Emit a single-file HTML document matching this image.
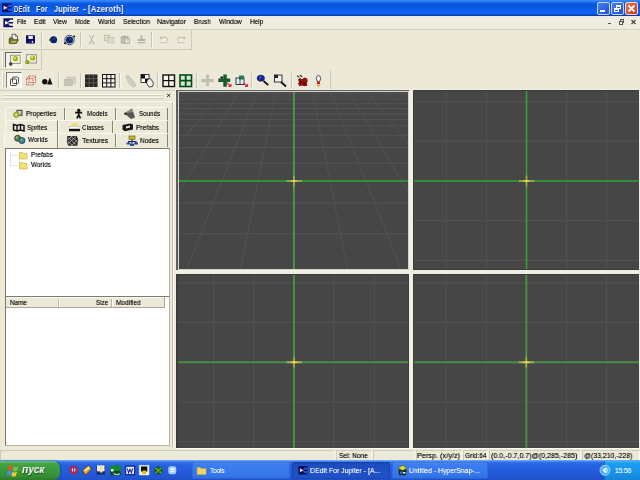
<!DOCTYPE html>
<html><head><meta charset="utf-8"><title>DEdit</title>
<style>
*{box-sizing:border-box;margin:0;padding:0}
html,body{width:640px;height:480px;overflow:hidden;background:#ECE9D8;font-family:"Liberation Sans",sans-serif;}
.a{position:absolute}
.t{position:absolute;white-space:nowrap;font-size:7px;color:#1a1a1a;line-height:8px;will-change:transform}
#title{left:0;top:0;width:640px;height:16px;background:linear-gradient(#3b8ef8 0%,#2c7af3 9%,#0d5be4 20%,#0655dc 42%,#0a5cea 58%,#0f63f4 78%,#0c57e2 89%,#0a3cae 96%,#0a3cae 100%);}
#title .tt{left:14px;top:3px;font-size:9px;line-height:10px;font-weight:bold;color:#fff;white-space:nowrap;text-shadow:0.5px 0.5px 0 #0a2a80}
.wb{position:absolute;top:1.5px;width:13px;height:13px;border:1px solid #c4d4fc;border-radius:2px;background:linear-gradient(135deg,#4a7ff0,#2050d8)}
.sep{position:absolute;width:2px;border-left:1px solid #c6c3b2;border-right:1px solid #f6f5ee}
.grip{position:absolute;width:2px;margin-left:-1px;border-left:1px solid #fbfaf5;border-right:1px solid #cdcab8;}
.hl{position:absolute;height:1px}
.vp{position:absolute;background:#464646;overflow:hidden}
svg{position:absolute;left:0;top:0;overflow:visible}
.tab{position:absolute;height:13px;background:#ECE9D8;border:1px solid #f9f8f1;border-right-color:#85826f;border-bottom:none;border-radius:2px 2px 0 0}
.tb{position:absolute;height:17px;top:462px;border-radius:2px;background:linear-gradient(#5a96f4 0%,#3c7ef0 12%,#3576ea 80%,#2c68da 100%);box-shadow:inset 0 0 0 0.5px #2a5cc8}

.cell{position:absolute;top:450px;height:10.5px;border:1px solid #cfccba;border-right-color:#fbfaf5;border-bottom-color:#fbfaf5}
</style></head><body>
<div id="title" class="a"><div class="t" style="left:14.10px;top:3.60px;font-size:9px;line-height:10px;color:#f4f7ff;transform:scaleX(0.6724);transform-origin:0 0;font-weight:bold;text-shadow:0.5px 0.5px 0.3px #0a2a80;">DEdit</div><div class="t" style="left:35.90px;top:3.60px;font-size:9px;line-height:10px;color:#f4f7ff;transform:scaleX(0.8001);transform-origin:0 0;font-weight:bold;text-shadow:0.5px 0.5px 0.3px #0a2a80;">For</div><div class="t" style="left:53.50px;top:3.60px;font-size:9px;line-height:10px;color:#f4f7ff;transform:scaleX(0.8332);transform-origin:0 0;font-weight:bold;text-shadow:0.5px 0.5px 0.3px #0a2a80;">Jupiter</div><div class="t" style="left:82.80px;top:3.60px;font-size:9px;line-height:10px;color:#f4f7ff;transform:scaleX(0.9341);transform-origin:0 0;font-weight:bold;text-shadow:0.5px 0.5px 0.3px #0a2a80;">-</div><div class="t" style="left:88.40px;top:3.60px;font-size:9px;line-height:10px;color:#f4f7ff;transform:scaleX(0.9014);transform-origin:0 0;font-weight:bold;text-shadow:0.5px 0.5px 0.3px #0a2a80;">[Azeroth]</div><svg width="14" height="16" viewBox="0 0 14 16"><path d="M2 3.2 H11.6 V4.7 H8.5 L6.5 7 H11.6 V8.4 H6.5 L8.5 10.7 H11.6 V12.2 H2Z" fill="#10106a"/><path d="M3.6 5.7 L7.6 7.7 L3.6 9.7Z" fill="#f4e0f4"/></svg><div class="wb" style="left:597px"><div class="a" style="left:2px;top:7px;width:5px;height:2px;background:#fff"></div></div><div class="wb" style="left:611px"><div class="a" style="left:4px;top:2px;width:5px;height:4px;border:1px solid #fff;border-top-width:2px"></div><div class="a" style="left:2px;top:5px;width:5px;height:4px;border:1px solid #fff;border-top-width:2px;background:#2a5ce0"></div></div><div class="wb" style="left:625px;background:linear-gradient(135deg,#e8754a,#c83c18);border-color:#f4d8d0"><svg width="11" height="11" viewBox="0 0 11 11"><path d="M2.5 2.5 L8.5 8.5 M8.5 2.5 L2.5 8.5" stroke="#fff" stroke-width="1.8"/></svg></div></div>
<div class="a" style="left:0;top:16px;width:640px;height:13px;background:linear-gradient(#e9e9e3 0%,#ecece4 12%,#f0eee1 30%,#efecdc 100%)"></div><svg width="16" height="30" viewBox="0 0 16 30"><g transform="translate(1.4,15)"><path d="M2 3.2 H11.6 V4.7 H8.5 L6.5 7 H11.6 V8.4 H6.5 L8.5 10.7 H11.6 V12.2 H2Z" fill="#10106a"/><path d="M3.6 5.700 L7.6 7.7 L3.6 9.7Z" fill="#ffffff"/></g></svg><div class="t" style="left:17.00px;top:18.40px;font-size:7px;line-height:8px;color:#0c0c0c;transform:scaleX(0.8245);transform-origin:0 0;text-shadow:0 0 0.6px rgba(0,0,0,0.55);">File</div><div class="t" style="left:34.00px;top:18.40px;font-size:7px;line-height:8px;color:#0c0c0c;transform:scaleX(0.9534);transform-origin:0 0;text-shadow:0 0 0.6px rgba(0,0,0,0.55);">Edit</div><div class="t" style="left:52.70px;top:18.40px;font-size:7px;line-height:8px;color:#0c0c0c;transform:scaleX(0.9171);transform-origin:0 0;text-shadow:0 0 0.6px rgba(0,0,0,0.55);">View</div><div class="t" style="left:74.50px;top:18.40px;font-size:7px;line-height:8px;color:#0c0c0c;transform:scaleX(0.8623);transform-origin:0 0;text-shadow:0 0 0.6px rgba(0,0,0,0.55);">Mode</div><div class="t" style="left:98.30px;top:18.40px;font-size:7px;line-height:8px;color:#0c0c0c;transform:scaleX(0.9309);transform-origin:0 0;text-shadow:0 0 0.6px rgba(0,0,0,0.55);">World</div><div class="t" style="left:122.80px;top:18.40px;font-size:7px;line-height:8px;color:#0c0c0c;transform:scaleX(0.9376);transform-origin:0 0;text-shadow:0 0 0.6px rgba(0,0,0,0.55);">Selection</div><div class="t" style="left:157.30px;top:18.40px;font-size:7px;line-height:8px;color:#0c0c0c;transform:scaleX(0.9680);transform-origin:0 0;text-shadow:0 0 0.6px rgba(0,0,0,0.55);">Navigator</div><div class="t" style="left:194.40px;top:18.40px;font-size:7px;line-height:8px;color:#0c0c0c;transform:scaleX(0.9132);transform-origin:0 0;text-shadow:0 0 0.6px rgba(0,0,0,0.55);">Brush</div><div class="t" style="left:218.80px;top:18.40px;font-size:7px;line-height:8px;color:#0c0c0c;transform:scaleX(0.9158);transform-origin:0 0;text-shadow:0 0 0.6px rgba(0,0,0,0.55);">Window</div><div class="t" style="left:249.70px;top:18.40px;font-size:7px;line-height:8px;color:#0c0c0c;transform:scaleX(0.9169);transform-origin:0 0;text-shadow:0 0 0.6px rgba(0,0,0,0.55);">Help</div><div class="a" style="left:607.5px;top:23px;width:3.5px;height:1.3px;background:#555"></div><div class="a" style="left:620px;top:19px;width:4px;height:4px;border:0.7px solid #555;border-top-width:1.3px"></div><div class="a" style="left:618.5px;top:20.7px;width:4px;height:4px;border:0.7px solid #555;border-top-width:1.3px;background:#EFECDD"></div><svg width="640" height="30" viewBox="0 0 640 30"><path d="M631.5 20 L635.5 24 M635.5 20 L631.5 24" stroke="#444" stroke-width="1.1"/></svg><div class="hl" style="left:0;top:29px;width:640px;background:#d6d2c2"></div>
<!-- toolbar 1 -->
<div class="grip" style="left:3px;top:32px;height:15px"></div>
<div class="a" style="left:0;top:49px;width:192px;height:1px;background:#cfcbb9"></div>
<div class="a" style="left:191px;top:30px;width:1px;height:19px;background:#cfcbb9"></div>
<div class="sep" style="left:41px;top:32px;height:15px"></div>
<div class="sep" style="left:80px;top:32px;height:15px"></div>
<div class="sep" style="left:151px;top:32px;height:15px"></div>
<svg width="200" height="50" viewBox="0 0 200 50">
<!-- open -->
<path d="M12 34.300 h3.500 l2 2 v3.800 h-5.500z" fill="#f6f6ee" stroke="#3a3a3a" stroke-width="0.800"/><path d="M15.500 34.300 v2 h2" fill="none" stroke="#3a3a3a" stroke-width="0.600"/>
<path d="M9.200 38.600 L11.300 37.300 L13 38.400 L13 39.800 L18.400 39.800 L16.400 43.400 L9.200 43.400 Z" fill="#77771f" stroke="#3c3c10" stroke-width="0.700"/>
<path d="M10.400 42.700 L12 40.700 L17 40.700 L15.700 42.700Z" fill="#b4b45c"/>
<!-- save -->
<rect x="26" y="35.300" width="9" height="8.100" fill="#0c0c58"/><rect x="28.400" y="35.900" width="4.400" height="3.100" fill="#ececf6"/><rect x="28.600" y="40.600" width="5" height="2.800" fill="#22227a"/><rect x="31.900" y="40.900" width="1.200" height="1.900" fill="#e4e4f4"/>
<!-- globe -->
<circle cx="53.600" cy="39.700" r="4.300" fill="#e2e6f2" opacity="0.700"/><circle cx="53.600" cy="39.700" r="3.500" fill="#10206a"/><circle cx="54.600" cy="38.700" r="1.300" fill="#24408c"/>
<path d="M48.800 40.300 L51.800 36.800 L52 39 L53 39.400 L51.600 41.200 Z" fill="#163c24"/>
<!-- globe 2 -->
<circle cx="69.500" cy="40" r="5.400" fill="none" stroke="#d4def2" stroke-width="0.900"/><circle cx="69.500" cy="40" r="4.700" fill="none" stroke="#1c2c48" stroke-width="0.800"/><circle cx="69.500" cy="40" r="3.600" fill="#10206a"/><circle cx="70.300" cy="39" r="1.300" fill="#24408c"/>
<rect x="64.100" y="42.400" width="1.700" height="1.700" fill="#050505"/><rect x="73.400" y="35.600" width="1.700" height="1.700" fill="#050505"/>
<!-- disabled: cut, copy, paste, del -->
<path d="M89.500 35 l3.800 8 M93.700 35 l-3.800 8" stroke="#bcb9a9" stroke-width="1"/><circle cx="89.800" cy="43.200" r="0.900" fill="none" stroke="#bcb9a9" stroke-width="0.700"/><circle cx="93.400" cy="43.200" r="0.900" fill="none" stroke="#bcb9a9" stroke-width="0.700"/>
<rect x="104.300" y="35.200" width="5" height="5.500" fill="#dedbca" stroke="#bcb9a9" stroke-width="0.800"/><rect x="107.800" y="37.500" width="5.500" height="5.500" fill="#e2dfce" stroke="#bcb9a9" stroke-width="0.800"/><path d="M109 39.500 h3 M109 41 h3" stroke="#c8c5b5" stroke-width="0.500"/>
<rect x="121.200" y="36.800" width="7" height="6.300" fill="#c4c1b2" stroke="#a9a697" stroke-width="0.800"/><rect x="124.500" y="38.800" width="5.200" height="4.500" fill="#e0ddcc" stroke="#a9a697" stroke-width="0.700"/><rect x="123" y="35.800" width="3.400" height="1.600" fill="#a9a697"/>
<path d="M140.500 35.600 h2 v3.500 h2.800 v2 h-7.500 v-2 h2.700z M137.800 42 h7.500 v1.200 h-7.500z" fill="#b6b3a4"/>
<!-- undo/redo disabled -->
<path d="M161 38 q3-2.200 6 0 q1 1.500 0 3.500" fill="none" stroke="#bfbcac" stroke-width="1"/><path d="M159.600 36.200 l0.600 3 l2.600-1z" fill="#bfbcac"/><path d="M160 42.700 h7.500" stroke="#c4c1b1" stroke-width="0.900"/>
<path d="M184 38 q-3-2.200 -6 0 q-1 1.500 0 3.500" fill="none" stroke="#bfbcac" stroke-width="1"/><path d="M185.400 36.200 l-0.600 3 l-2.600-1z" fill="#bfbcac"/><path d="M177.500 42.700 h7.500" stroke="#c4c1b1" stroke-width="0.900"/>
</svg>
<!-- toolbar 2 -->
<div class="grip" style="left:3px;top:52px;height:15px"></div>
<div class="a" style="left:0;top:69px;width:42px;height:1px;background:#cfcbb9"></div>
<div class="a" style="left:41px;top:50px;width:1px;height:19px;background:#cfcbb9"></div>
<div class="a" style="left:5px;top:52px;width:17px;height:16px;background:#f3f2ea;border:1.300px solid #66665f;border-right:1px solid #fdfdf8;border-bottom:1px solid #fdfdf8"></div>
<svg width="50" height="70" viewBox="0 0 50 70">
<rect x="10.500" y="55.200" width="9.700" height="8.200" fill="#f3f3e2" stroke="#8c8c80" stroke-width="0.900"/>
<circle cx="15.400" cy="58.700" r="2.600" fill="#a9b214"/><circle cx="14.900" cy="58.100" r="1.100" fill="#dfe865"/>
<circle cx="10.750" cy="64" r="1.700" fill="#1c1c1c"/><circle cx="10.900" cy="64" r="0.600" fill="#d8d8d8"/>
<rect x="26.400" y="54.700" width="10" height="8.300" fill="#f0f0de" stroke="#8c8c80" stroke-width="0.900"/>
<circle cx="32.600" cy="58" r="2.600" fill="#a9b214"/><circle cx="32.100" cy="57.400" r="1.100" fill="#dfe865"/>
<circle cx="27.300" cy="62.100" r="2.200" fill="#8c9410"/><circle cx="26.900" cy="61.600" r="0.800" fill="#c8d040"/>
</svg>
<!-- toolbar 3 -->
<div class="grip" style="left:3px;top:73px;height:15px"></div>
<div class="a" style="left:0;top:90px;width:331px;height:1px;background:#cfcbb9"></div>
<div class="a" style="left:330px;top:70px;width:1px;height:20px;background:#cfcbb9"></div>
<div class="a" style="left:6px;top:72px;width:16px;height:16px;background:#f8f7f0;border:1px solid #7f7c6e;border-right-color:#fff;border-bottom-color:#fff"></div>
<div class="sep" style="left:58px;top:73px;height:15px"></div>
<div class="sep" style="left:80px;top:73px;height:15px"></div>
<div class="sep" style="left:119px;top:73px;height:15px"></div>
<div class="sep" style="left:157px;top:73px;height:15px"></div>
<div class="sep" style="left:196px;top:73px;height:15px"></div>
<div class="sep" style="left:251px;top:73px;height:15px"></div>
<div class="sep" style="left:291px;top:73px;height:15px"></div>
<svg width="340" height="95" viewBox="0 0 340 95">
<!-- 1 box wire -->
<rect x="10.500" y="79" width="6" height="6.500" rx="1" fill="none" stroke="#333" stroke-width="0.900"/><rect x="12.500" y="77" width="6" height="6.500" rx="1" fill="none" stroke="#444" stroke-width="0.900"/>
<!-- 2 red wire -->
<g stroke="#d04848" stroke-width="0.800" fill="none" stroke-dasharray="1.600 0.800"><rect x="26.500" y="78.500" width="6.500" height="6.500"/><rect x="29" y="76" width="6.500" height="6.500"/><path d="M26.500 78.500 l2.500-2.500 M33 78.500 l2.500-2.500 M26.500 85 l2.500-2.500 M33 85 l2.500-2.500"/></g>
<!-- 3 ball cone -->
<circle cx="44.800" cy="81.700" r="2.700" fill="#111"/><path d="M49.800 77.500 l2.700 7 h-5.400z" fill="#111"/>
<!-- 4 gray -->
<rect x="67" y="77" width="8.500" height="6.500" fill="#d8d5c6" stroke="#c2bfae" stroke-width="0.700"/><rect x="64.500" y="79.500" width="8" height="6" fill="#c8c5b6" stroke="#b8b5a4" stroke-width="0.700"/>
<!-- 5 dark grid -->
<rect x="85" y="74.500" width="12.500" height="12.500" fill="#2a2824"/><path d="M89.200 74.500 v12.500 M93.400 74.500 v12.500 M85 78.700 h12.500 M85 82.900 h12.500" stroke="#6a665c" stroke-width="0.800"/>
<!-- 6 light grid -->
<rect x="102.500" y="74.500" width="12.500" height="12.500" fill="#f4f2ea" stroke="#111" stroke-width="1"/><path d="M106.700 74.500 v12.500 M110.900 74.500 v12.500 M102.500 78.700 h12.500 M102.500 82.900 h12.500" stroke="#111" stroke-width="1"/>
<!-- 7 hand disabled -->
<path d="M125.500 76.500 l3-1 l6 7 l1.500 3.500 l-3 1 l-3.500-3 z" fill="#d0cdbc" stroke="#bcb9a8" stroke-width="0.700"/>
<!-- 8 checker+hand -->
<rect x="141" y="74.500" width="8" height="8" fill="#fff" stroke="#111" stroke-width="0.800"/><rect x="141" y="74.500" width="4" height="4" fill="#111"/><rect x="145" y="78.500" width="4" height="4" fill="#111"/>
<path d="M147.500 79.500 l3-1 l3 4.500 l-1 3.500 l-3.500 0.500 l-2.500-4z" fill="#f4f2ea" stroke="#222" stroke-width="0.800"/>
<!-- 9 four pane -->
<rect x="163" y="75" width="11.500" height="11.500" fill="#f8f6ee" stroke="#111" stroke-width="1.400"/><path d="M168.700 75 v11.500 M163 80.700 h11.500" stroke="#111" stroke-width="1.200"/>
<!-- 10 green four pane -->
<rect x="180" y="75" width="11.500" height="11.500" fill="#c8f0d0" stroke="#0a4a1a" stroke-width="1.600"/><path d="M185.700 75 v11.500 M180 80.700 h11.500" stroke="#0a4a1a" stroke-width="1.800"/>
<!-- 11 gray plus -->
<path d="M206 74.500 h3 v4.500 h4.700 v3.300 h-4.700 v4 h-3 v-4 h-4.700 v-3.300 h4.700z" fill="#c2bfb0"/>
<!-- 12 green plus + red arrow -->
<path d="M223.300 74.500 h3.500 v4 h3.400 v3.500 h-3.400 v4.800 h-3.500 v-4.800 h-5 v-3.500 h5z" fill="#155a30"/><rect x="220.500" y="76.500" width="2.500" height="2" fill="#1a1a1a"/><path d="M227 83 l4 3.500 M231 86.500 v-2.500 M231 86.500 h-2.500" stroke="#e02020" stroke-width="1.100" fill="none"/>
<!-- 13 box + red arrow -->
<rect x="236" y="78" width="8" height="6.500" fill="#e8f0f0" stroke="#223" stroke-width="0.900"/><rect x="239" y="75.500" width="5" height="4" fill="#2a7a5a"/><path d="M240 78 v6.500" stroke="#223" stroke-width="0.800"/><path d="M243.500 83 l4 3.500 M247.500 86.500 v-2.500 M247.500 86.500 h-2.500" stroke="#e02020" stroke-width="1.100" fill="none"/>
<!-- 14 blue magnifier -->
<ellipse cx="260.800" cy="78.200" rx="3.600" ry="3" fill="#1a28a8" stroke="#0a0a50" stroke-width="0.800"/><circle cx="260" cy="77.500" r="1" fill="#4a60d8"/><path d="M263.600 81 l4.600 4.200" stroke="#111" stroke-width="1.800"/>
<!-- 15 magnifier -->
<rect x="274.500" y="75" width="7.500" height="7" fill="#f4f4f4" stroke="#222" stroke-width="0.900"/><rect x="274.500" y="75" width="3.500" height="3" fill="#222"/><path d="M281 82 l5 4.500" stroke="#111" stroke-width="1.800"/>
<!-- 16 red -->
<path d="M298 79.500 l2-1.500 l2 1.200 l2.500-1.700 l2.700 1 l0.500 3 l-1 1.500 l0.800 2.500 l-3 0.800 l-2.500-0.800 l-2.500 0.800 l-1.500-2.500 l1-1.800z" fill="#8c0c0c"/><circle cx="301" cy="82" r="0.800" fill="#200"/><circle cx="304.500" cy="83.500" r="0.800" fill="#200"/><circle cx="305" cy="80.300" r="0.700" fill="#c03030"/>
<path d="M297.200 75.800 l2.200 1.600 M300 75.200 l2.200 1.600" stroke="#2a1a1a" stroke-width="1.100"/>
<!-- 17 lamp -->
<ellipse cx="318.500" cy="78.500" rx="2.200" ry="3" fill="#f0f0f0" stroke="#333" stroke-width="0.800"/><rect x="317" y="81.500" width="3" height="2.500" fill="#c02020"/><path d="M316 84.500 h5 l-2.500 2.500z" fill="#e8a020"/>
</svg>
<!-- left panel -->
<div class="a" style="left:171.500px;top:101px;width:1.200px;height:347px;background:#c4c1b1"></div>
<div class="a" style="left:172.700px;top:101px;width:1.300px;height:347px;background:#fbfaf4"></div><div class="a" style="left:0;top:447.700px;width:175px;height:0.800px;background:#d9d6c6"></div>
<div class="a" style="left:2px;top:94px;width:161px;height:2px;border-top:1px solid #f8f7f0;border-bottom:1px solid #d0cdbc"></div>
<div class="a" style="left:2px;top:97px;width:161px;height:2px;border-top:1px solid #f8f7f0;border-bottom:1px solid #d0cdbc"></div>
<svg width="180" height="100" viewBox="0 0 180 100"><path d="M167.200 94 l3 2.800 M170.200 94 l-3 2.800" stroke="#222" stroke-width="1"/></svg>
<div class="a" style="left:0;top:100px;width:173px;height:1px;background:#e3e0d0"></div>
<div class="a" style="left:0;top:101px;width:173px;height:1px;background:#fbfaf4"></div>
<!-- tabs row1 -->
<div class="tab" style="left:5px;top:107px;width:60px"></div>
<div class="tab" style="left:65px;top:107px;width:51px"></div>
<div class="tab" style="left:116px;top:107px;width:52px"></div>
<!-- row2 -->
<div class="tab" style="left:5px;top:120px;width:53px"></div>
<div class="tab" style="left:58px;top:120px;width:55px"></div>
<div class="tab" style="left:113px;top:120px;width:55px"></div>
<!-- row3 -->
<div class="tab" style="left:58px;top:133px;width:58px;height:14px"></div>
<div class="tab" style="left:116px;top:133px;width:52px;height:14px"></div>
<div class="tab" style="left:4px;top:132px;width:54px;height:16px;background:#F1EEE0"></div>
<div class="t" style="left:26.00px;top:110.45px;font-size:7.5px;line-height:8.5px;color:#0c0c0c;transform:scaleX(0.8864);transform-origin:0 0;text-shadow:0 0 0.6px rgba(0,0,0,0.55);">Properties</div>
<div class="t" style="left:87.20px;top:110.45px;font-size:7.5px;line-height:8.5px;color:#0c0c0c;transform:scaleX(0.8479);transform-origin:0 0;text-shadow:0 0 0.6px rgba(0,0,0,0.55);">Models</div>
<div class="t" style="left:138.90px;top:110.45px;font-size:7.5px;line-height:8.5px;color:#0c0c0c;transform:scaleX(0.8295);transform-origin:0 0;text-shadow:0 0 0.6px rgba(0,0,0,0.55);">Sounds</div>
<div class="t" style="left:27.40px;top:124.05px;font-size:7.5px;line-height:8.5px;color:#0c0c0c;transform:scaleX(0.8739);transform-origin:0 0;text-shadow:0 0 0.6px rgba(0,0,0,0.55);">Sprites</div>
<div class="t" style="left:81.50px;top:124.05px;font-size:7.5px;line-height:8.5px;color:#0c0c0c;transform:scaleX(0.8135);transform-origin:0 0;text-shadow:0 0 0.6px rgba(0,0,0,0.55);">Classes</div>
<div class="t" style="left:136.00px;top:124.05px;font-size:7.5px;line-height:8.5px;color:#0c0c0c;transform:scaleX(0.8898);transform-origin:0 0;text-shadow:0 0 0.6px rgba(0,0,0,0.55);">Prefabs</div>
<div class="t" style="left:28.10px;top:136.45px;font-size:7.5px;line-height:8.5px;color:#0c0c0c;transform:scaleX(0.8491);transform-origin:0 0;text-shadow:0 0 0.6px rgba(0,0,0,0.55);">Worlds</div>
<div class="t" style="left:81.50px;top:137.45px;font-size:7.5px;line-height:8.5px;color:#0c0c0c;transform:scaleX(0.9243);transform-origin:0 0;text-shadow:0 0 0.6px rgba(0,0,0,0.55);">Textures</div>
<div class="t" style="left:140.30px;top:137.45px;font-size:7.5px;line-height:8.5px;color:#0c0c0c;transform:scaleX(0.8625);transform-origin:0 0;text-shadow:0 0 0.6px rgba(0,0,0,0.55);">Nodes</div>
<svg width="180" height="150" viewBox="0 0 180 150">
<!-- properties icon -->
<rect x="17" y="110.300" width="5" height="5" fill="#c8c8b8" stroke="#3a3a3a" stroke-width="1"/><circle cx="16.200" cy="114.800" r="2.700" fill="#b0c030" stroke="#7a8a20" stroke-width="0.600"/><circle cx="16.200" cy="114.800" r="1" fill="#e8ecb0"/>
<!-- models icon (stick figure) -->
<circle cx="78.700" cy="110.400" r="1.700" fill="#111"/><path d="M75.200 112.600 h7 M78.700 111.500 v4 M78.700 115 l-1.800 3.300 M78.700 115 l1.800 3.300" stroke="#111" stroke-width="1.700" fill="none"/>
<!-- sounds icon -->
<path d="M124.500 113.500 l7.500-5 l3 9 l-4 1.500z" fill="#555"/><path d="M124.500 113.500 l7.500-5 l1 3.500z" fill="#888"/><circle cx="125.500" cy="113.800" r="1.300" fill="#333"/>
<!-- sprites icon -->
<path d="M13.500 124.500 l3.500 1 l3.500-1 l3.500 1 v5.500 l-3.500-1 l-3.500 1 l-3.500-1z" fill="#e8e8e8" stroke="#111" stroke-width="1.500"/><path d="M17 125.500 v5.500 M20.500 124.500 v5.500" stroke="#111" stroke-width="1.400"/>
<!-- classes icon -->
<path d="M70.500 125.500 l2-2 h4 l2 2z" fill="#e8e040"/><rect x="69" y="126.500" width="11" height="2" fill="#f8f8f8" stroke="#999" stroke-width="0.400"/><rect x="69" y="129" width="11" height="2.200" fill="#111"/>
<!-- prefabs icon -->
<path d="M122.500 125 l8-1.500 l2.500 1 v5 l-8 1.800 l-2.500-1.500z" fill="#1a1a1a"/><path d="M126 126.500 l4-1 v2 l-4 1z" fill="#e8e8e8"/>
<!-- worlds icon -->
<circle cx="17.600" cy="138.300" r="3" fill="#5f8040" stroke="#2a3a22" stroke-width="0.800"/><circle cx="22" cy="140.600" r="3" fill="#3f7f9c" stroke="#1a3a4a" stroke-width="0.800"/><circle cx="16.800" cy="137.500" r="1" fill="#a8c090"/><circle cx="21.400" cy="139.800" r="1" fill="#90c0d8"/>
<!-- textures icon -->
<path d="M67.300 136 h9.500 l1.500 4 l-1 5.700 h-9 l-1.500-4.500z" fill="#2a2a2a"/><path d="M68 137.500 l8 7 M70.500 136 l7 6 M67.500 141 l5 4.500 M76 136.500 l-8 7 M77.500 140 l-6 5.500 M72.500 136 l-5 4" stroke="#d8d8d8" stroke-width="0.600"/>
<!-- nodes icon -->
<rect x="129" y="136" width="6" height="3.500" fill="#c8b428" stroke="#5a5a18" stroke-width="0.600"/><path d="M132 139.500 v2 M128 141.500 h8.500 M128.500 141.500 v1.500 M136 141.500 v1.500 M132 141.500 v2.500" stroke="#14245a" stroke-width="1.100" fill="none"/><rect x="126.500" y="142.500" width="4" height="2" fill="#2a4aa0"/><rect x="134" y="142.500" width="4" height="2" fill="#2a4aa0"/><rect x="130" y="144" width="4" height="2" fill="#2a4aa0"/>
</svg>
<!-- tree box -->
<div class="a" style="left:4.5px;top:147.500px;width:165px;height:149.500px;background:#fff;border:1px solid #7d7a6c;border-right:1.5px solid #b6b3a5;border-bottom:none"></div>
<svg width="180" height="300" viewBox="0 0 180 300">
<path d="M10.500 152 v13.500 M10.500 155.500 h7 M10.500 165.500 h7" stroke="#c4c4c4" stroke-width="0.800" stroke-dasharray="1 1" fill="none"/>
<path d="M19.500 152.500 h3 l1 1 h3.500 v5.500 h-7.500z" fill="#f4e070" stroke="#c8a838" stroke-width="0.600"/>
<path d="M19.500 162.500 h3 l1 1 h3.500 v5.500 h-7.500z" fill="#f4e070" stroke="#c8a838" stroke-width="0.600"/>
</svg>
<div class="t" style="left:31.20px;top:150.60px;font-size:7px;line-height:8px;color:#0c0c0c;transform:scaleX(0.9119);transform-origin:0 0;text-shadow:0 0 0.6px rgba(0,0,0,0.55);">Prefabs</div>
<div class="t" style="left:31.20px;top:160.90px;font-size:7px;line-height:8px;color:#0c0c0c;transform:scaleX(0.9098);transform-origin:0 0;text-shadow:0 0 0.6px rgba(0,0,0,0.55);">Worlds</div>
<!-- list box -->
<div class="a" style="left:4.5px;top:296px;width:165px;height:149.500px;background:#fff;border:1px solid #7d7a6c;border-right:1.5px solid #b6b3a5;border-bottom:1.5px solid #b6b3a5"></div>
<div class="a" style="left:5.5px;top:297px;width:159.5px;height:10.7px;background:#ECE9D8;border-bottom:1px solid #aaa796;border-right:1px solid #aaa796;border-top:1px solid #fbfaf5"></div>
<div class="a" style="left:58px;top:298.500px;width:2px;height:8px;border-left:1px solid #b8b4a2;border-right:1px solid #fff"></div>
<div class="a" style="left:111px;top:298.500px;width:2px;height:8px;border-left:1px solid #b8b4a2;border-right:1px solid #fff"></div>
<div class="t" style="left:9.80px;top:299.40px;font-size:7px;line-height:8px;color:#0c0c0c;transform:scaleX(0.9050);transform-origin:0 0;text-shadow:0 0 0.6px rgba(0,0,0,0.55);">Name</div>
<div class="t" style="left:96.20px;top:299.40px;font-size:7px;line-height:8px;color:#0c0c0c;transform:scaleX(0.8885);transform-origin:0 0;text-shadow:0 0 0.6px rgba(0,0,0,0.55);">Size</div>
<div class="t" style="left:115.90px;top:299.40px;font-size:7px;line-height:8px;color:#0c0c0c;transform:scaleX(0.9335);transform-origin:0 0;text-shadow:0 0 0.6px rgba(0,0,0,0.55);">Modified</div>
<div class="a" style="left:175px;top:89px;width:465px;height:360px;background:#F1EFE3"></div><div class="a" style="left:176px;top:90px;width:232.5px;height:179.5px;background:#5e5e5a"></div><div class="a" style="left:413px;top:90px;width:225.8px;height:179.5px;background:#3c3c38"></div><div class="a" style="left:176px;top:273.8px;width:232.5px;height:174.4px;background:#3c3c38"></div><div class="a" style="left:413px;top:273.8px;width:225.8px;height:174.4px;background:#3c3c38"></div><div class="vp" style="left:178px;top:91px;width:230.5px;height:178.5px"><svg width="230.5" height="178.5" viewBox="178 91 230.5 178.5"><line x1="178" y1="93.5" x2="408.5" y2="93.5" stroke="#535353" stroke-width="1"/><line x1="178" y1="96" x2="408.5" y2="96" stroke="#535353" stroke-width="1"/><line x1="178" y1="99.3" x2="408.5" y2="99.3" stroke="#535353" stroke-width="1"/><line x1="178" y1="103.6" x2="408.5" y2="103.6" stroke="#535353" stroke-width="1"/><line x1="178" y1="108.5" x2="408.5" y2="108.5" stroke="#535353" stroke-width="1"/><line x1="178" y1="114" x2="408.5" y2="114" stroke="#535353" stroke-width="1"/><line x1="178" y1="119.6" x2="408.5" y2="119.6" stroke="#535353" stroke-width="1"/><line x1="178" y1="126" x2="408.5" y2="126" stroke="#535353" stroke-width="1"/><line x1="178" y1="135.3" x2="408.5" y2="135.3" stroke="#535353" stroke-width="1"/><line x1="178" y1="147.5" x2="408.5" y2="147.5" stroke="#535353" stroke-width="1"/><line x1="178" y1="163.3" x2="408.5" y2="163.3" stroke="#535353" stroke-width="1"/><line x1="178" y1="203" x2="408.5" y2="203" stroke="#535353" stroke-width="1"/><line x1="178" y1="233.8" x2="408.5" y2="233.8" stroke="#535353" stroke-width="1"/><line x1="76.7" y1="91" x2="-349.3" y2="269.5" stroke="#535353" stroke-width="1"/><line x1="94.8" y1="91" x2="-295.7" y2="269.5" stroke="#535353" stroke-width="1"/><line x1="112.9" y1="91" x2="-242.1" y2="269.5" stroke="#535353" stroke-width="1"/><line x1="131.0" y1="91" x2="-188.5" y2="269.5" stroke="#535353" stroke-width="1"/><line x1="149.1" y1="91" x2="-134.9" y2="269.5" stroke="#535353" stroke-width="1"/><line x1="167.2" y1="91" x2="-81.3" y2="269.5" stroke="#535353" stroke-width="1"/><line x1="185.3" y1="91" x2="-27.7" y2="269.5" stroke="#535353" stroke-width="1"/><line x1="203.4" y1="91" x2="25.9" y2="269.5" stroke="#535353" stroke-width="1"/><line x1="221.5" y1="91" x2="79.5" y2="269.5" stroke="#535353" stroke-width="1"/><line x1="239.6" y1="91" x2="133.1" y2="269.5" stroke="#535353" stroke-width="1"/><line x1="257.7" y1="91" x2="186.7" y2="269.5" stroke="#535353" stroke-width="1"/><line x1="275.8" y1="91" x2="240.3" y2="269.5" stroke="#535353" stroke-width="1"/><line x1="312.0" y1="91" x2="347.5" y2="269.5" stroke="#535353" stroke-width="1"/><line x1="330.1" y1="91" x2="401.1" y2="269.5" stroke="#535353" stroke-width="1"/><line x1="348.2" y1="91" x2="454.7" y2="269.5" stroke="#535353" stroke-width="1"/><line x1="366.3" y1="91" x2="508.3" y2="269.5" stroke="#535353" stroke-width="1"/><line x1="384.4" y1="91" x2="561.9" y2="269.5" stroke="#535353" stroke-width="1"/><line x1="402.5" y1="91" x2="615.5" y2="269.5" stroke="#535353" stroke-width="1"/><line x1="420.6" y1="91" x2="669.1" y2="269.5" stroke="#535353" stroke-width="1"/><line x1="438.7" y1="91" x2="722.7" y2="269.5" stroke="#535353" stroke-width="1"/><line x1="456.8" y1="91" x2="776.3" y2="269.5" stroke="#535353" stroke-width="1"/><line x1="474.9" y1="91" x2="829.9" y2="269.5" stroke="#535353" stroke-width="1"/><line x1="493.0" y1="91" x2="883.5" y2="269.5" stroke="#535353" stroke-width="1"/><line x1="511.1" y1="91" x2="937.1" y2="269.5" stroke="#535353" stroke-width="1"/><line x1="293.9" y1="91" x2="293.9" y2="269.5" stroke="#4f944f" stroke-width="1.9"/><line x1="178" y1="181" x2="408.5" y2="181" stroke="#2aa832" stroke-width="1.6"/><line x1="286.4" y1="181" x2="301.9" y2="181" stroke="#b4c060" stroke-width="1.6" opacity="0.75"/><line x1="290.4" y1="181" x2="297.4" y2="181" stroke="#dcc438" stroke-width="1.6" opacity="0.85"/><line x1="293.9" y1="175.5" x2="293.9" y2="186.5" stroke="#d0c040" stroke-width="1.4" opacity="0.7"/><rect x="292.9" y="180" width="2" height="2" fill="#f4e040"/></svg><div class="a" style="left:0;top:0;width:230.5px;height:178.5px;border:1px solid #d4d4cc"></div></div><div class="vp" style="left:414px;top:91px;width:224.79999999999995px;height:178.3px"><svg width="224.79999999999995" height="178.3" viewBox="414 91 224.79999999999995 178.3"><line x1="446.3" y1="91" x2="446.3" y2="269.3" stroke="#535353" stroke-width="1"/><line x1="414" y1="101.6" x2="638.8" y2="101.6" stroke="#535353" stroke-width="1"/><line x1="486.4" y1="91" x2="486.4" y2="269.3" stroke="#535353" stroke-width="1"/><line x1="414" y1="141.3" x2="638.8" y2="141.3" stroke="#535353" stroke-width="1"/><line x1="566.6" y1="91" x2="566.6" y2="269.3" stroke="#535353" stroke-width="1"/><line x1="414" y1="220.7" x2="638.8" y2="220.7" stroke="#535353" stroke-width="1"/><line x1="606.7" y1="91" x2="606.7" y2="269.3" stroke="#535353" stroke-width="1"/><line x1="414" y1="260.4" x2="638.8" y2="260.4" stroke="#535353" stroke-width="1"/><line x1="526.5" y1="91" x2="526.5" y2="269.3" stroke="#3fa040" stroke-width="1.5"/><line x1="414" y1="181" x2="638.8" y2="181" stroke="#2aa832" stroke-width="1.6"/><line x1="519.0" y1="181" x2="534.5" y2="181" stroke="#b4c060" stroke-width="1.6" opacity="0.75"/><line x1="523.0" y1="181" x2="530.0" y2="181" stroke="#dcc438" stroke-width="1.6" opacity="0.85"/><line x1="526.5" y1="175.5" x2="526.5" y2="186.5" stroke="#d0c040" stroke-width="1.4" opacity="0.7"/><rect x="525.5" y="180" width="2" height="2" fill="#f4e040"/></svg></div><div class="vp" style="left:178px;top:275px;width:230.39999999999998px;height:173px"><svg width="230.39999999999998" height="173" viewBox="178 275 230.39999999999998 173"><line x1="213.8" y1="275" x2="213.8" y2="448" stroke="#535353" stroke-width="1"/><line x1="178" y1="282.8" x2="408.4" y2="282.8" stroke="#535353" stroke-width="1"/><line x1="253.9" y1="275" x2="253.9" y2="448" stroke="#535353" stroke-width="1"/><line x1="178" y1="322.5" x2="408.4" y2="322.5" stroke="#535353" stroke-width="1"/><line x1="334.1" y1="275" x2="334.1" y2="448" stroke="#535353" stroke-width="1"/><line x1="178" y1="401.9" x2="408.4" y2="401.9" stroke="#535353" stroke-width="1"/><line x1="374.2" y1="275" x2="374.2" y2="448" stroke="#535353" stroke-width="1"/><line x1="178" y1="441.6" x2="408.4" y2="441.6" stroke="#535353" stroke-width="1"/><line x1="294" y1="275" x2="294" y2="448" stroke="#478f47" stroke-width="2"/><line x1="178" y1="362.2" x2="408.4" y2="362.2" stroke="#468e46" stroke-width="2"/><line x1="286.5" y1="362.2" x2="302" y2="362.2" stroke="#b4c060" stroke-width="2" opacity="0.75"/><line x1="290.5" y1="362.2" x2="297.5" y2="362.2" stroke="#dcc438" stroke-width="2" opacity="0.85"/><line x1="294" y1="356.7" x2="294" y2="367.7" stroke="#d0c040" stroke-width="1.4" opacity="0.7"/><rect x="293" y="361.2" width="2" height="2" fill="#f4e040"/></svg></div><div class="vp" style="left:414px;top:275px;width:224.79999999999995px;height:173px"><svg width="224.79999999999995" height="173" viewBox="414 275 224.79999999999995 173"><line x1="446.1" y1="275" x2="446.1" y2="448" stroke="#535353" stroke-width="1"/><line x1="414" y1="282.8" x2="638.8" y2="282.8" stroke="#535353" stroke-width="1"/><line x1="486.2" y1="275" x2="486.2" y2="448" stroke="#535353" stroke-width="1"/><line x1="414" y1="322.5" x2="638.8" y2="322.5" stroke="#535353" stroke-width="1"/><line x1="566.4" y1="275" x2="566.4" y2="448" stroke="#535353" stroke-width="1"/><line x1="414" y1="401.9" x2="638.8" y2="401.9" stroke="#535353" stroke-width="1"/><line x1="606.5" y1="275" x2="606.5" y2="448" stroke="#535353" stroke-width="1"/><line x1="414" y1="441.6" x2="638.8" y2="441.6" stroke="#535353" stroke-width="1"/><line x1="526.3" y1="275" x2="526.3" y2="448" stroke="#478f47" stroke-width="2"/><line x1="414" y1="362.2" x2="638.8" y2="362.2" stroke="#468e46" stroke-width="2"/><line x1="518.8" y1="362.2" x2="534.3" y2="362.2" stroke="#b4c060" stroke-width="2" opacity="0.75"/><line x1="522.8" y1="362.2" x2="529.8" y2="362.2" stroke="#dcc438" stroke-width="2" opacity="0.85"/><line x1="526.3" y1="356.7" x2="526.3" y2="367.7" stroke="#d0c040" stroke-width="1.4" opacity="0.7"/><rect x="525.3" y="361.2" width="2" height="2" fill="#f4e040"/></svg></div>
<div class="a" style="left:0;top:448.2px;width:640px;height:13px;background:#ECE9D8"></div><div class="a" style="left:175px;top:448.2px;width:465px;height:1.2px;background:#faf9f3"></div><div class="cell" style="left:0px;width:335px"></div><div class="cell" style="left:336px;width:35.5px"></div><div class="cell" style="left:372.5px;width:42px"></div><div class="cell" style="left:415.5px;width:46.5px"></div><div class="cell" style="left:463px;width:25px"></div><div class="cell" style="left:489px;width:91.5px"></div><div class="cell" style="left:581.5px;width:58.5px"></div><div class="t" style="left:338.80px;top:451.90px;font-size:7.6px;line-height:8.6px;color:#0c0c0c;transform:scaleX(0.8599);transform-origin:0 0;text-shadow:0 0 0.6px rgba(0,0,0,0.55);">Sel: None</div><div class="t" style="left:417.00px;top:451.90px;font-size:7.6px;line-height:8.6px;color:#0c0c0c;transform:scaleX(0.9606);transform-origin:0 0;text-shadow:0 0 0.6px rgba(0,0,0,0.55);">Persp. (x/y/z)</div><div class="t" style="left:465.00px;top:451.90px;font-size:7.6px;line-height:8.6px;color:#0c0c0c;transform:scaleX(0.8626);transform-origin:0 0;text-shadow:0 0 0.6px rgba(0,0,0,0.55);">Grid:64</div><div class="t" style="left:491.00px;top:451.90px;font-size:7.6px;line-height:8.6px;color:#0c0c0c;transform:scaleX(0.9338);transform-origin:0 0;text-shadow:0 0 0.6px rgba(0,0,0,0.55);">(0.0,-0.7,0.7)@(0,285,-285)</div><div class="t" style="left:583.50px;top:451.90px;font-size:7.6px;line-height:8.6px;color:#0c0c0c;transform:scaleX(0.9091);transform-origin:0 0;text-shadow:0 0 0.6px rgba(0,0,0,0.55);">@(33,210,-228)</div>
<div class="a" style="left:0;top:460.400px;width:640px;height:19.600px;background:linear-gradient(#7db2f8 0%,#4a8cf4 6%,#2a6ae8 14%,#2560e0 30%,#2459d8 70%,#1f50c8 100%)"></div>
<div class="a" style="left:0;top:461px;width:60px;height:19px;border-radius:0 7px 7px 0;background:linear-gradient(#6bbd6b 0%,#45a545 14%,#3a9a3a 45%,#348f34 80%,#2b7a2b 100%);box-shadow:1px 0 2px #1a4aa8"></div>
<svg width="60" height="480" viewBox="0 0 60 480">
<path d="M8.600 466.300 q2.200-1.400 4.400 0 l-1 4.200 q-2.200-1.400-4.400 0z" fill="#e8552c"/>
<path d="M13.700 466.600 q2.200 1.400 4.400 0 l-1 4.200 q-2.200 1.400-4.400 0z" fill="#7ac24a"/>
<path d="M7.400 471.400 q2.200-1.400 4.400 0 l-1 4.200 q-2.200-1.400-4.400 0z" fill="#4a8ae8"/>
<path d="M12.500 471.700 q2.200 1.400 4.400 0 l-1 4.200 q-2.200 1.400-4.400 0z" fill="#f0c830"/>
</svg>
<div class="t" style="left:21.90px;top:464.35px;font-size:10.5px;line-height:11.5px;color:#fff;transform:scaleX(0.9652);transform-origin:0 0;font-weight:bold;font-style:italic;text-shadow:0.7px 0.7px 1px #1a4a1a;">пуск</div>
<!-- quick launch -->
<svg width="200" height="480" viewBox="0 0 200 480">
<circle cx="73.600" cy="470" r="3.300" fill="none" stroke="#c4202f" stroke-width="2.200"/><circle cx="73.600" cy="470" r="2" fill="#e4d4ee"/><path d="M73.600 466 v8" stroke="#7a3a9a" stroke-width="1.200"/>
<path d="M82.300 470.500 L88.500 465.200 L91.600 469 L85.500 475Z" fill="#f0a020" stroke="#2a2010" stroke-width="0.600"/><path d="M84.500 470 L88.700 466.700 L89.700 468 L85.500 471.500Z" fill="#fff4d0"/>
<rect x="96.500" y="465.300" width="8.500" height="9.300" fill="#1a2a6a"/><rect x="97" y="465.300" width="7.500" height="6" fill="#f4f0e0"/><rect x="100" y="466" width="2.500" height="6.500" fill="#f0e0a0"/>
<rect x="110.200" y="465.300" width="10.500" height="10" fill="#158a2c"/><rect x="110.200" y="471" width="10.500" height="4.300" fill="#0a4a2a"/><path d="M113 472.500 q3 2.500 6.500 0.500 v1.800 h-5z" fill="#f0f0f0"/><rect x="111" y="469" width="2.500" height="2.500" fill="#e8f4e8"/>
<rect x="125.600" y="466.200" width="9" height="8.400" fill="#f4f4ff" stroke="#1a2a90" stroke-width="1.300"/><path d="M127.300 468.300 l1.300 4.500 l1.400-3.500 l1.400 3.500 l1.300-4.500" stroke="#1a2a90" stroke-width="1.100" fill="none"/>
<rect x="139.300" y="465.300" width="9.700" height="9.700" fill="#f0ecd8"/><rect x="141" y="466.500" width="6.300" height="5" fill="#111"/><rect x="142.500" y="470.500" width="3.500" height="3.500" fill="#e0b818"/><path d="M139.300 465.300 h9.700 v9.700 h-9.700z" fill="none" stroke="#fff" stroke-width="0.800" stroke-dasharray="1 1"/>
<circle cx="158.400" cy="470.400" r="4.200" fill="#125a12"/><circle cx="156.500" cy="468.800" r="1" fill="#48c848"/><circle cx="160.300" cy="468.800" r="1" fill="#48c848"/><circle cx="156.500" cy="472.200" r="1" fill="#48c848"/><circle cx="160.300" cy="472.200" r="1" fill="#48c848"/><circle cx="158.400" cy="470.400" r="1.200" fill="#e89020"/>
<rect x="168.300" y="466.200" width="8" height="8" rx="2.200" fill="#a4cef0"/><circle cx="172.600" cy="470" r="2.300" fill="#eef8ff"/><path d="M170.500 470.300 h4" stroke="#8ab8e0" stroke-width="0.800"/>
</svg>
<!-- task buttons -->
<div class="tb" style="left:191.500px;width:98px"><svg width="20" height="17" viewBox="0 0 20 17"><path d="M5 5.500 h3 l1 1 h5 v6 h-9z" fill="#f4d468" stroke="#c8a030" stroke-width="0.500"/></svg><div class="t" style="left:18.20px;top:4.85px;font-size:7.5px;line-height:8.5px;color:#fff;transform:scaleX(0.8396);transform-origin:0 0;text-shadow:0 0 0.5px rgba(255,255,255,0.5);">Tools</div></div>
<div class="tb" style="left:291.500px;width:98px;background:linear-gradient(#1a45b0 0%,#1e4dc0 20%,#2052c8 100%);box-shadow:inset 0 0 0 0.500px #163a98"><svg width="20" height="17" viewBox="0 0 20 17"><g transform="translate(4.500,1) scale(0.95)"><path d="M2 3.200 H11.600 V4.700 H8.500 L6.500 7 H11.600 V8.400 H6.500 L8.500 10.700 H11.600 V12.200 H2Z" fill="#0c0c50"/><path d="M3.600 5.700 L7.600 7.700 L3.600 9.700Z" fill="#f4e0f4"/></g></svg><div class="t" style="left:18.00px;top:4.85px;font-size:7.5px;line-height:8.5px;color:#fff;transform:scaleX(0.9217);transform-origin:0 0;text-shadow:0 0 0.5px rgba(255,255,255,0.5);">DEdit For Jupiter - [A...</div></div>
<div class="tb" style="left:391.500px;width:96px"><svg width="20" height="17" viewBox="0 0 20 17"><path d="M6.300 7.500 L14.700 7.500 L14 13.300 L7 13.300Z" fill="#142a22"/><path d="M6 6 L10.500 3.500 L15 6 L10.500 8.500Z" fill="#e4dc24" stroke="#3a3a10" stroke-width="0.400"/><rect x="8" y="9.500" width="2.500" height="2.500" fill="#3a6ad0"/><rect x="11" y="10" width="2.500" height="1.500" fill="#e8f0e8"/></svg><div class="t" style="left:17.40px;top:4.85px;font-size:7.5px;line-height:8.5px;color:#fff;transform:scaleX(0.9073);transform-origin:0 0;text-shadow:0 0 0.5px rgba(255,255,255,0.5);">Untitled - HyperSnap-...</div></div>
<!-- tray -->
<div class="a" style="left:603.500px;top:461px;width:36.500px;height:19px;background:linear-gradient(#3cb4f6 0%,#1c9cf0 14%,#1893ec 60%,#1484d8 100%);border-left:1px solid #1868c8"></div>
<svg width="640" height="480" viewBox="0 0 640 480"><circle cx="605" cy="470.300" r="5" fill="#4ab0f8" stroke="#a8d8fc" stroke-width="0.900"/><circle cx="605.400" cy="470.300" r="2.800" fill="#8cd0fc"/><path d="M606.400 468 L604 470.300 L606.400 472.600" stroke="#fff" stroke-width="1.300" fill="none"/></svg>
<div class="t" style="left:614.60px;top:466.80px;font-size:7.2px;line-height:8.2px;color:#fff;transform:scaleX(0.9102);transform-origin:0 0;text-shadow:0 0 0.5px rgba(255,255,255,0.5);">15:56</div>
</body></html>
